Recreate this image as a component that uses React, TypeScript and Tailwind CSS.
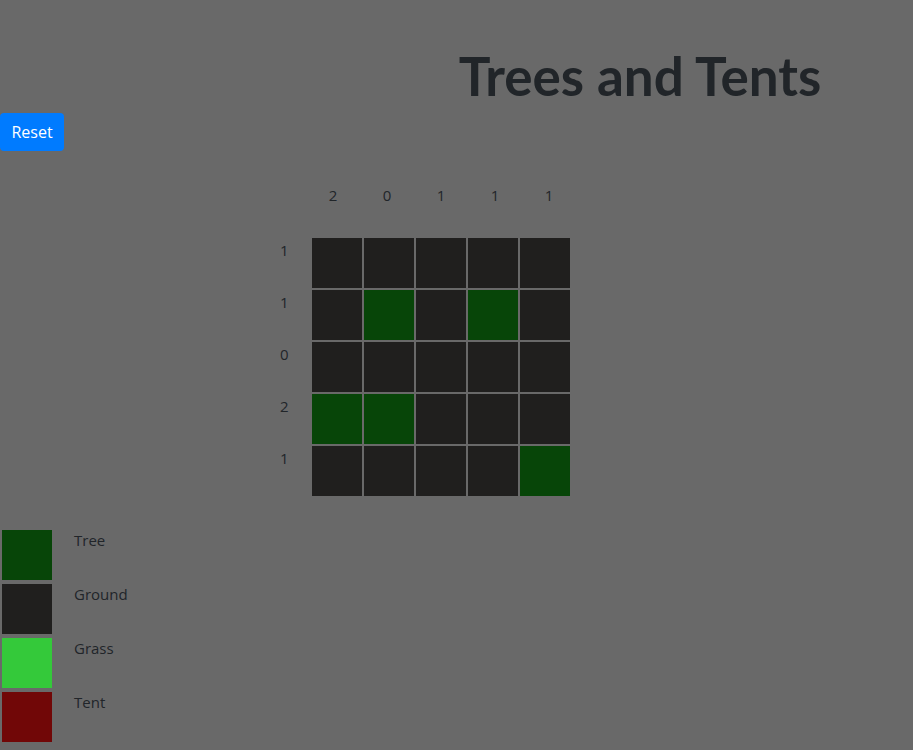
const grid = [
  [0, 0, 0, 0, 0],
  [0, 1, 0, 1, 0],
  [0, 0, 0, 0, 0],
  [1, 1, 0, 0, 0],
  [0, 0, 0, 0, 1],
];

const colTotals = [2, 0, 1, 1, 1];
const rowTotals = [1, 1, 0, 2, 1];

const legend = [
  { name: "Tree", color: "bg-[#074508]" },
  { name: "Ground", color: "bg-[#201f1e]" },
  { name: "Grass", color: "bg-[#34c93a]" },
  { name: "Tent", color: "bg-[#710707]" },
];

export default function App() {
  return (
    <div className="min-h-[750px] bg-[#696969] text-[#212529] font-['Open_Sans',sans-serif]">
      <div className="flex justify-center pl-[367px] pt-[46px]">
        <h1 className="font-['Lato',sans-serif] text-[53px] font-bold leading-[60px]">Trees and Tents</h1>
      </div>

      <button className="mt-[7px] h-[38px] w-[64px] rounded bg-[#007bff] text-[16px] text-white">
        Reset
      </button>

      {/* board */}
      <div className="mt-[32px] flex flex-col items-start pl-[270px]">
        <div className="ml-[36px] flex h-[24px] text-[15px] leading-[24px]">
          {colTotals.map((n, i) => (
            <div key={i} className="w-[54px] text-center">{n}</div>
          ))}
        </div>
        <div className="mt-[31px] flex flex-col gap-[2px]">
          {grid.map((row, r) => (
            <div key={r} className="flex gap-[2px]">
              <div className="w-[40px] pl-[10px] text-[15px] leading-[24px]">{rowTotals[r]}</div>
              {row.map((c, k) => (
                <div key={k} className={`h-[50px] w-[50px] ${c ? "bg-[#074508]" : "bg-[#201f1e]"}`} />
              ))}
            </div>
          ))}
        </div>
      </div>

      {/* legend */}
      <div className="mt-[34px] flex flex-col gap-[4px] pl-[2px]">
        {legend.map((l) => (
          <div key={l.name} className="flex">
            <div className={`h-[50px] w-[50px] ${l.color}`} />
            <span className="ml-[22px] text-[15px] leading-[20px]">{l.name}</span>
          </div>
        ))}
      </div>
    </div>
  );
}
